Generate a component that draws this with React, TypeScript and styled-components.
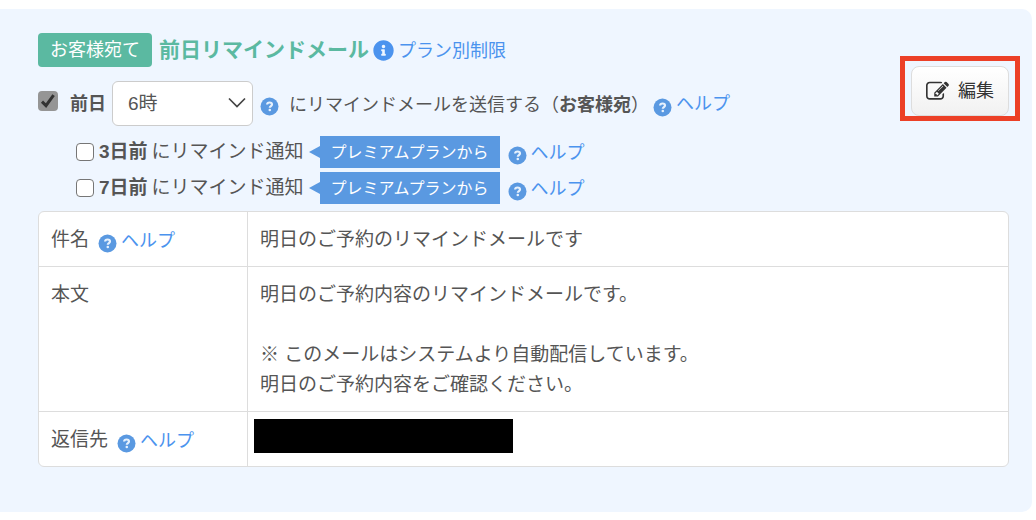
import React from 'react';
import styled, { createGlobalStyle } from 'styled-components';
import { FaInfoCircle } from 'react-icons/fa';

const GlobalStyle = createGlobalStyle`
  *, *::before, *::after { box-sizing: border-box; }
  body {
    margin: 0;
    background: #fff;
    color: #555;
    font-family: "Liberation Sans", "Noto Sans CJK JP", sans-serif;
    font-size: 18px;
    line-height: 30px;
  }
`;

const Panel = styled.main`
  margin: 9px 4px 8px 0;
  padding: 24px 23px 45px 38px;
  background: #eff6ff;
  border-radius: 0 10px 10px 0;
`;

const Header = styled.header`
  display: flex;
  justify-content: space-between;
  align-items: flex-start;
`;

const Settings = styled.div`
  display: flex;
  flex-direction: column;
`;

const TitleRow = styled.div`
  display: flex;
  align-items: center;
  height: 34px;
`;

const Audience = styled.span`
  padding: 2px 12px;
  border-radius: 4px;
  background: #5bb9a1;
  color: #fff;
`;

const Title = styled.h1`
  margin: 0 4px 0 7px;
  color: #5bb9a1;
  font-size: 21px;
  line-height: 30px;
`;

const Link = styled.a`
  display: inline-flex;
  align-items: center;
  gap: 4px;
  padding-top: 1px;
  color: #4b93ee;
  font-size: 18px;
  line-height: 30px;
  text-decoration: none;
  white-space: nowrap;
`;

const SendRow = styled.div`
  display: flex;
  align-items: center;
  height: 45px;
  margin: 14px 0 10px;
  white-space: nowrap;
`;

const CheckLabel = styled.label`
  display: flex;
  align-items: center;
  gap: 12px;
  margin-right: 6px;
`;

const CheckWrap = styled.span`
  position: relative;
  display: flex;
  margin-bottom: 6px;
`;

const CheckedBox = styled.input`
  appearance: none;
  width: 20px;
  height: 20px;
  margin: 0;
  border-radius: 4px;
  background: #959595;
`;

const CheckMark = styled.svg`
  position: absolute;
  inset: 0;
  pointer-events: none;
`;

const SelectWrap = styled.span`
  position: relative;
  display: flex;
  margin-right: 7px;
`;

const HourSelect = styled.select`
  appearance: none;
  width: 141px;
  height: 45px;
  padding: 0 15px;
  border: 1px solid #ccc;
  border-radius: 6px;
  background: #fff;
  color: #555;
  font: inherit;
  font-size: 19px;
`;

const Chevron = styled.svg`
  position: absolute;
  top: 15px;
  right: 7px;
  pointer-events: none;
`;

const Sentence = styled.span`
  margin: 0 4px 0 10px;
  padding-top: 2px;
`;

const HelpMark = styled.svg`
  flex: none;
  position: relative;
  top: 3px;
`;

const OptionRow = styled.div`
  display: flex;
  align-items: center;
  height: 32px;
  margin: 0 0 4px 38px;
  font-size: 19px;
  white-space: nowrap;
`;

const OptionLabel = styled.label`
  display: flex;
  align-items: center;
  gap: 5px;
`;

const Days = styled.b`
  margin-right: 4px;
`;

const EmptyBox = styled.input`
  appearance: none;
  width: 18px;
  height: 18px;
  margin: 0;
  border: 1px solid #767676;
  border-radius: 4px;
  background: #fff;
`;

const PlanTag = styled.span`
  display: flex;
  align-items: center;
  height: 32px;
  margin: 0 8px 0 5px;
  font-size: 16px;
  color: #fff;

  &::before {
    content: "";
    border: 6px solid transparent;
    border-right: 11px solid #5a99e1;
    border-left: 0;
  }
`;

const PlanText = styled.span`
  padding: 2px 11px 0;
  background: #5a99e1;
`;

const EditFrame = styled.div`
  flex: none;
  margin: 23px -11px 0 0;
  padding: 5px 6px 0;
  border: 5px solid #ec4027;
`;

const EditButton = styled.button`
  display: flex;
  align-items: center;
  justify-content: center;
  gap: 9px;
  width: 98px;
  height: 50px;
  padding: 0;
  border: 1px solid #ddd;
  border-radius: 8px;
  background: linear-gradient(#fff, #f1f1f1);
  color: #333;
  font: inherit;
`;

const MailTable = styled.table`
  width: 100%;
  margin-top: 3px;
  border: 1px solid #ddd;
  border-radius: 6px;
  border-spacing: 0;
  background: #fff;
  font-size: 19px;
  overflow: hidden;

  tr + tr > * { border-top: 1px solid #ddd; }
`;

const HeadCell = styled.th`
  width: 208px;
  padding: 13px 12px 11px;
  font-weight: normal;
  text-align: left;
  vertical-align: top;
`;

const HeadContent = styled.div`
  display: flex;
  gap: 9px;
  height: 30px;
  align-items: center;
`;

const Cell = styled.td<{ $tight?: boolean }>`
  padding: ${(p) => (p.$tight ? '7px 6px' : '13px 12px 11px')};
  border-left: 1px solid #ddd;
  vertical-align: top;
  white-space: pre-line;
`;

const Redacted = styled.div`
  width: 259px;
  height: 34px;
  background: #000;
`;

function HelpIcon() {
  return (
    <HelpMark width="19" height="19" viewBox="0 0 19 19" aria-hidden="true">
      <circle cx="9.5" cy="9.5" r="9" fill="#5a99e1" />
      <path
        d="M7.1 7.5C7.2 6.2 8 5.5 9.5 5.5s2.5.8 2.5 2c0 1.5-2.2 1.6-2.2 3.2"
        fill="none"
        stroke="#e6f1fd"
        strokeWidth="2.2"
      />
      <circle cx="9.8" cy="13" r="1.3" fill="#e6f1fd" />
    </HelpMark>
  );
}

function HelpLink() {
  return (
    <Link href="#help">
      <HelpIcon />
      ヘルプ
    </Link>
  );
}

function EditIcon() {
  return (
    <svg width="23" height="23" viewBox="0 0 1792 1792" fill="#333" aria-hidden="true">
      <path d="M888 1184l116-116-152-152-116 116v56h96v96h56zm440-720q-16-16-33 1l-350 350q-17 17-1 33t33-1l350-350q17-17 1-33zm80 594v190q0 119-84.5 203.5t-203.5 84.5h-832q-119 0-203.5-84.5t-84.5-203.5v-832q0-119 84.5-203.5t203.5-84.5h832q63 0 117 25 15 7 18 23 3 17-9 29l-49 49q-14 14-32 8-23-6-45-6h-832q-66 0-113 47t-47 113v832q0 66 47 113t113 47h832q66 0 113-47t47-113v-126q0-13 9-22l64-64q15-15 35-7t20 29zm-96-738l288 288-672 672h-288v-288zm444 132l-92 92-288-288 92-92q28-28 68-28t68 28l152 152q28 28 28 68t-28 68z" />
    </svg>
  );
}

function ReminderOption({ days }: { days: string }) {
  return (
    <OptionRow>
      <OptionLabel>
        <EmptyBox type="checkbox" />
        <span>
          <Days>{days}</Days>にリマインド通知
        </span>
      </OptionLabel>
      <PlanTag>
        <PlanText>プレミアムプランから</PlanText>
      </PlanTag>
      <HelpLink />
    </OptionRow>
  );
}

export default function App() {
  return (
    <>
      <GlobalStyle />
      <Panel>
        <Header>
          <Settings>
            <TitleRow>
              <Audience>お客様宛て</Audience>
              <Title>前日リマインドメール</Title>
              <Link href="#plans">
                <FaInfoCircle size={21} />
                プラン別制限
              </Link>
            </TitleRow>
            <SendRow>
              <CheckLabel>
                <CheckWrap>
                  <CheckedBox type="checkbox" defaultChecked />
                  <CheckMark width="20" height="20" viewBox="0 0 20 20" aria-hidden="true">
                    <path d="M4 10.6l4 4L15.6 4.2" fill="none" stroke="#333" strokeWidth="3" />
                  </CheckMark>
                </CheckWrap>
                <b>前日</b>
              </CheckLabel>
              <SelectWrap>
                <HourSelect aria-label="送信時刻" defaultValue="6">
                  <option value="6">6時</option>
                </HourSelect>
                <Chevron width="18" height="14" viewBox="0 0 18 14" aria-hidden="true">
                  <path d="M1 2.5l8 8 8-8" fill="none" stroke="#444" strokeWidth="1.7" />
                </Chevron>
              </SelectWrap>
              <HelpIcon />
              <Sentence>
                にリマインドメールを送信する（<b>お客様宛</b>）
              </Sentence>
              <HelpLink />
            </SendRow>
            <ReminderOption days="3日前" />
            <ReminderOption days="7日前" />
          </Settings>
          <EditFrame>
            <EditButton type="button">
              <EditIcon />
              編集
            </EditButton>
          </EditFrame>
        </Header>
        <MailTable>
          <tbody>
            <tr>
              <HeadCell scope="row">
                <HeadContent>
                  件名
                  <HelpLink />
                </HeadContent>
              </HeadCell>
              <Cell>明日のご予約のリマインドメールです</Cell>
            </tr>
            <tr>
              <HeadCell scope="row">本文</HeadCell>
              <Cell>
                {'明日のご予約内容のリマインドメールです。\n\n※ このメールはシステムより自動配信しています。\n明日のご予約内容をご確認ください。'}
              </Cell>
            </tr>
            <tr>
              <HeadCell scope="row">
                <HeadContent>
                  返信先
                  <HelpLink />
                </HeadContent>
              </HeadCell>
              <Cell $tight>
                <Redacted />
              </Cell>
            </tr>
          </tbody>
        </MailTable>
      </Panel>
    </>
  );
}
